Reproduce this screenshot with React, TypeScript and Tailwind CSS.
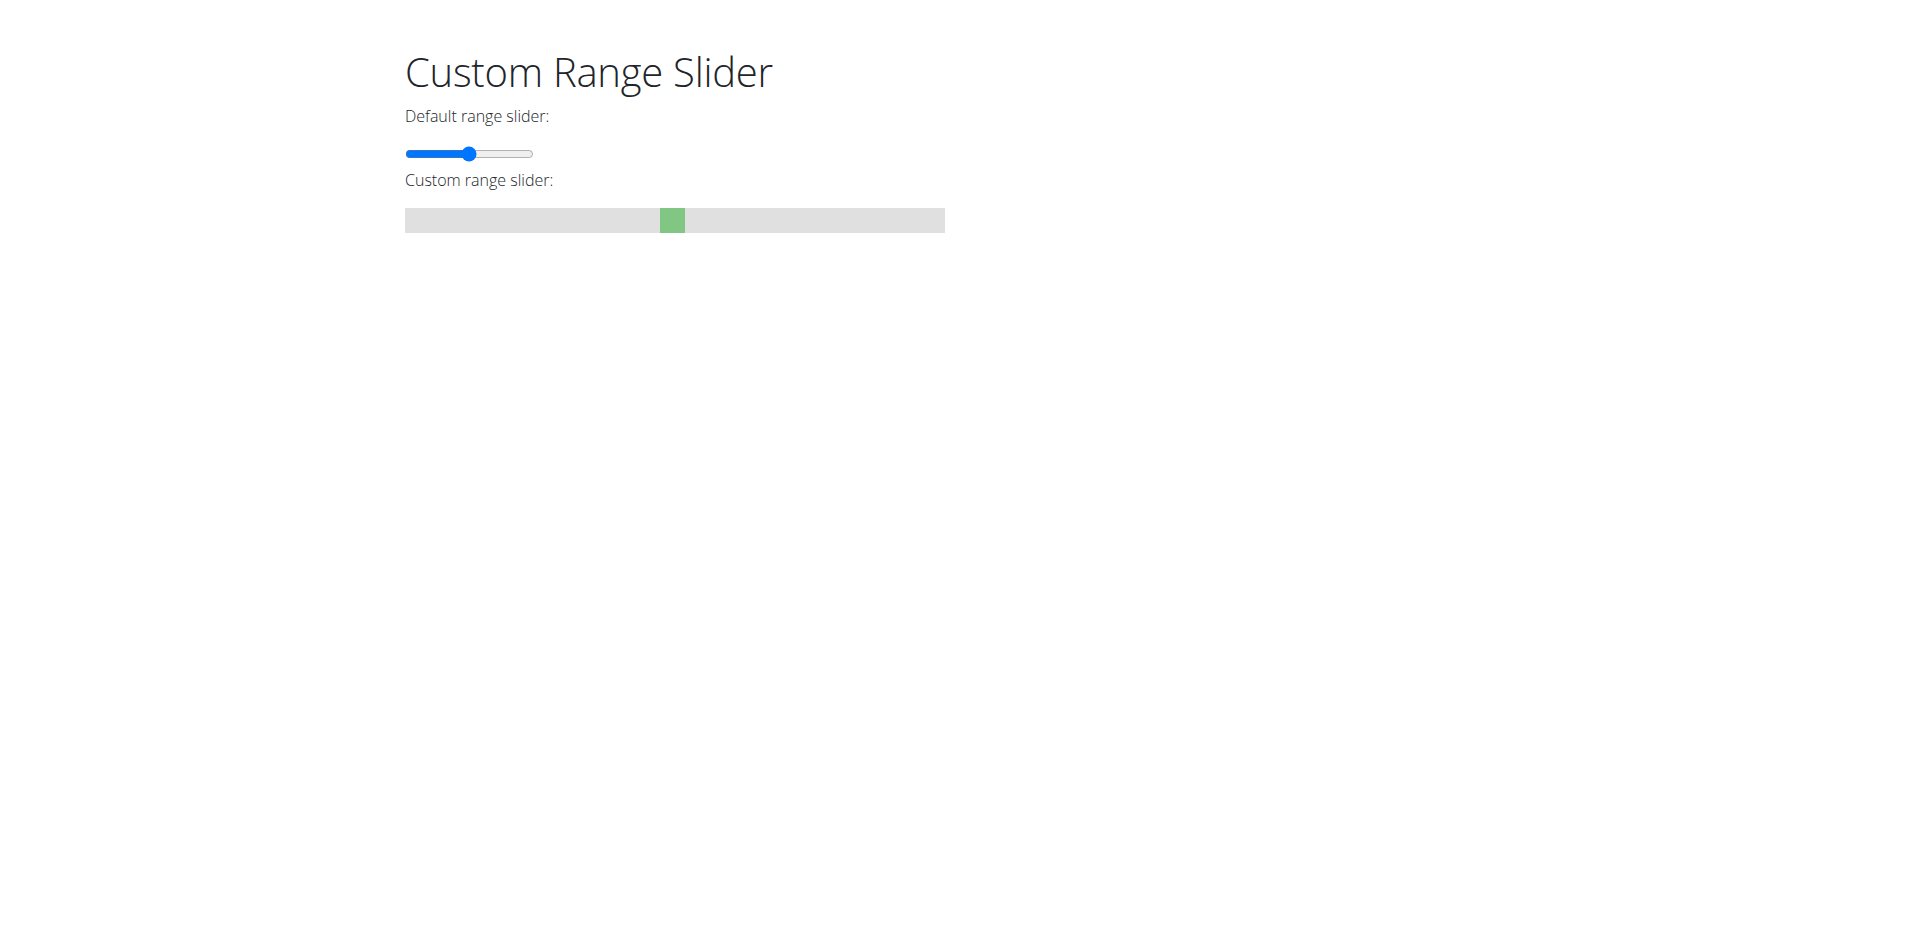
import React from 'react';

// w3schools-style slider: grey track, square green thumb, faded to 70%
const customSlider =
    'block w-[540px] h-[25px] appearance-none bg-[#d3d3d3] opacity-70 outline-none cursor-pointer ' +
    '[&::-webkit-slider-thumb]:appearance-none [&::-webkit-slider-thumb]:w-[25px] [&::-webkit-slider-thumb]:h-[25px] [&::-webkit-slider-thumb]:bg-[#4CAF50] [&::-webkit-slider-thumb]:cursor-pointer ' +
    '[&::-moz-range-thumb]:w-[25px] [&::-moz-range-thumb]:h-[25px] [&::-moz-range-thumb]:bg-[#4CAF50] [&::-moz-range-thumb]:border-0 [&::-moz-range-thumb]:rounded-none';

export default function App() {
    return (
        <div className="min-h-screen bg-white text-[#212529] font-['Open_Sans',sans-serif]">
            <div className="mx-auto w-[1140px] px-[15px] pt-12">
                <h1 className="text-[40px] font-light leading-[1.2] tracking-[-0.25px] mb-2">Custom Range Slider</h1>
                <p className="text-base leading-6 font-light mb-4">Default range slider:</p>
                <div className="h-6 pt-[2px]">
                    <input type="range" min={1} max={100} defaultValue={50} className="block w-[129px] h-4" />
                </div>
                <p className="text-base leading-6 font-light mb-4">Custom range slider:</p>
                <div>
                    <input type="range" min={1} max={100} defaultValue={50} className={customSlider} />
                </div>
            </div>
        </div>
    );
}
